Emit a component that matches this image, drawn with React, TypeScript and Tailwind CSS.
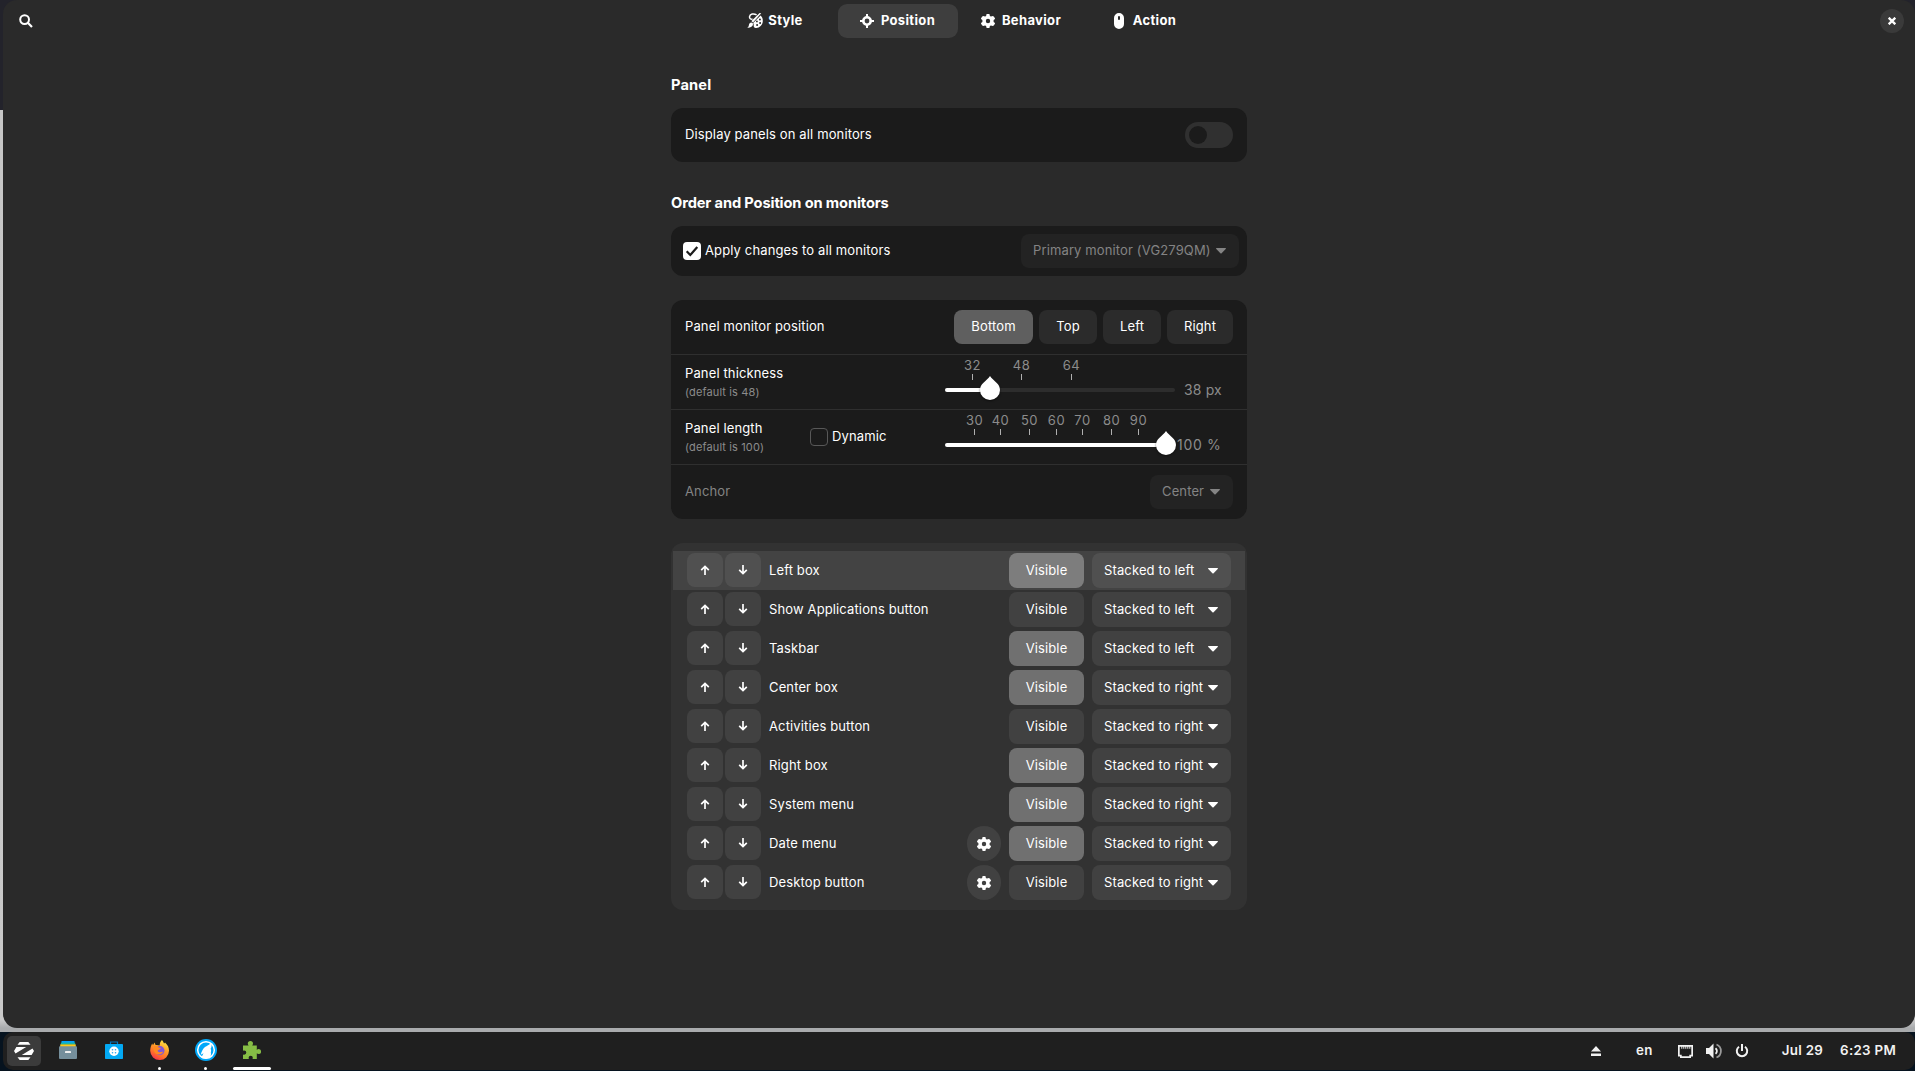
import React from "react";

type IconProps = { className?: string };

const Svg = ({
  size = 16,
  h,
  className = "",
  children,
}: {
  size?: number;
  h?: number;
  className?: string;
  children: React.ReactNode;
}) => (
  <svg
    width={size}
    height={h ?? size}
    viewBox={`0 0 ${size} ${h ?? size}`}
    className={`block shrink-0 ${className}`}
    fill="currentColor"
  >
    {children}
  </svg>
);

const SearchIcon = () => (
  <Svg size={14}>
    <circle cx="5.6" cy="5.6" r="4.4" fill="none" stroke="currentColor" strokeWidth="2" />
    <path d="M8.8 8.8 13 13" stroke="currentColor" strokeWidth="2.2" />
  </Svg>
);

const PaletteIcon = () => (
  <Svg size={16}>
    <path d="M9.6 1.900C6.800.1 2.800.9 2.500 3.800c-.1 1.700 1.200 2.700 3 2.300" fill="none" stroke="currentColor" strokeWidth="1.500" />
    <path d="M14.200.300 6 9.400 4.400 8 12.600.100z" />
    <path d="M4.300 9.600c1.100.1 1.700.8 1.700 1.700C5.900 13.600 3 15 .300 14.700c1.300-.6 1.500-1.500 1.600-2.600.2-1.500 1.100-2.500 2.400-2.500z" />
    <path
      fillRule="evenodd"
      d="M13.600 2.600C15.200 4 16 6 15.800 8.300c-.3 4.100-3.500 6.900-7.100 6.600-1.400-.1-2.100-1-2-2.200.1-1.300-.1-2.200-.5-2.800zM12.900 5.400a1 1 0 1 0 0 2 1 1 0 0 0 0-2zm.2 3.500a1 1 0 1 0 0 2 1 1 0 0 0 0-2zm-3 2.100a1 1 0 1 0 0 2 1 1 0 0 0 0-2zm-.2-3.500a.9.9 0 1 0 0 1.800.9.9 0 0 0 0-1.800z"
    />
  </Svg>
);

const TargetIcon = () => (
  <Svg size={14}>
    <circle cx="7" cy="7" r="3.700" fill="none" stroke="currentColor" strokeWidth="2.600" />
    <path d="M6 0h2v3H6zM6 11h2v3H6zM0 6h3v2H0zM11 6h3v2h-3z" />
  </Svg>
);

const GearIcon = ({ className }: IconProps) => (
  <Svg size={14} className={className}>
    <path
      fillRule="evenodd"
      d="M5.600 0h2.800l.5 1.900 1 .5 2-.5 1.100.9 1.100 2-1.500 1.300v1.800l1.500 1.300-1.100 2-1.100.9-2-.5-1 .5-.5 1.900H5.600l-.5-1.900-1-.5-2 .5-1.100-.9-1.100-2 1.500-1.300V6.100L-.1 4.800l1.100-2 1.100-.9 2 .5 1-.5zM7 4.800a2.200 2.200 0 1 0 0 4.400 2.200 2.200 0 0 0 0-4.400z"
    />
  </Svg>
);

const MouseIcon = () => (
  <Svg size={16}>
    <path
      fillRule="evenodd"
      d="M8 0a5 5 0 0 1 5 5v6A5 5 0 0 1 3 11V5a5 5 0 0 1 5-5zM8 3a1 1 0 0 0-1 1v2a1 1 0 0 0 2 0V4a1 1 0 0 0-1-1z"
    />
  </Svg>
);

const Caret = () => (
  <Svg size={10} h={6}>
    <path d="M.4 0h9.200q.6.400.1.900L5.600 5.300q-.6.500-1.200 0L.3.900Q-.2.400.4 0z" />
  </Svg>
);

const ArrowUp = () => (
  <Svg size={10}>
    <path d="M5 10V1.500M1.200 5.200 5 1.400l3.800 3.800" fill="none" stroke="currentColor" strokeWidth="1.700" />
  </Svg>
);

const ArrowDown = () => (
  <Svg size={10}>
    <path d="M5 0v8.500M1.200 4.800 5 8.600l3.800-3.800" fill="none" stroke="currentColor" strokeWidth="1.700" />
  </Svg>
);

const CloseIcon = () => (
  <Svg size={8}>
    <path d="M.7.7 7.300 7.300M7.300.7.7 7.300" stroke="currentColor" strokeWidth="2.300" />
  </Svg>
);

const Tab = ({
  icon,
  label,
  className,
}: {
  icon: React.ReactNode;
  label: string;
  className: string;
}) => (
  <button
    className={`flex h-[34px] items-center justify-center rounded-[9px] text-[13px] font-bold tracking-[0.350px] ${className}`}
  >
    {icon}
    {label}
  </button>
);

const Heading = ({ children, className }: { children: React.ReactNode; className: string }) => (
  <h2 className={`text-[14.670px] leading-5 font-bold ${className}`}>{children}</h2>
);

const Check = ({ checked = false }: { checked?: boolean }) =>
  checked ? (
    <span className="flex size-[18px] items-center justify-center rounded-[4px] bg-white text-[#1b1b1b]">
      <Svg size={14}>
        <path d="M1.700 7.300 5.300 11 12.300 3" fill="none" stroke="currentColor" strokeWidth="2.200" />
      </Svg>
    </span>
  ) : (
    <span className="size-[18px] rounded-[4px] border border-[#585858]" />
  );

const Mark = ({ label, className }: { label: string; className: string }) => (
  <span className={`absolute top-0 flex w-8 -translate-x-1/2 flex-col items-center ${className}`}>
    <span className="text-[13px] leading-[18px] tracking-[0.500px] text-[#8c8c8c]">{label}</span>
    <span className="h-[6px] w-px bg-[#b0b0b0]" />
  </span>
);

const Thumb = ({ className }: { className: string }) => (
  <svg
    width="22"
    height="26"
    viewBox="0 0 22 26"
    className={`absolute top-[18px] drop-shadow-[0_1px_1px_rgba(0,0,0,0.5)] ${className}`}
  >
    <path d="M11 1c1.500 2.300 4 4.300 6.500 6.700A10.200 10.200 0 0 1 21 15a10 10 0 0 1-20 0c0-3 1.300-5.400 3.500-7.300C7 5.300 9.500 3.300 11 1z" fill="#fff" />
  </svg>
);

const thicknessMarks = [
  { label: "32", at: "left-[27.5px]" },
  { label: "48", at: "left-[76.5px]" },
  { label: "64", at: "left-[126.5px]" },
];

const lengthMarks = [
  { label: "30", at: "left-[29.5px]" },
  { label: "40", at: "left-[55.5px]" },
  { label: "50", at: "left-[84.5px]" },
  { label: "60", at: "left-[111.5px]" },
  { label: "70", at: "left-[137.5px]" },
  { label: "80", at: "left-[166.5px]" },
  { label: "90", at: "left-[193.5px]" },
];

const rows = [
  { name: "Left box", visible: true, to: "Stacked to left", hover: true },
  { name: "Show Applications button", visible: false, to: "Stacked to left" },
  { name: "Taskbar", visible: true, to: "Stacked to left" },
  { name: "Center box", visible: true, to: "Stacked to right" },
  { name: "Activities button", visible: false, to: "Stacked to right" },
  { name: "Right box", visible: true, to: "Stacked to right" },
  { name: "System menu", visible: true, to: "Stacked to right" },
  { name: "Date menu", visible: true, to: "Stacked to right", gear: true },
  { name: "Desktop button", visible: false, to: "Stacked to right", gear: true },
];

const Row = ({ row }: { row: (typeof rows)[number] }) => {
  const soft = row.hover ? "bg-[#505050]" : "bg-[#414141]";
  const on = row.hover ? "bg-[#7d7d7d]" : "bg-[#707070]";
  return (
    <div className={`mx-0.5 flex h-[39px] items-start pt-0.5 pr-[14px] pl-[14px] ${row.hover ? "bg-[#434343]" : ""}`}>
      <button className={`flex h-[34px] w-9 items-center justify-center rounded-[8px] ${soft}`}>
        <ArrowUp />
      </button>
      <button className={`ml-0.5 flex h-[34px] w-9 items-center justify-center rounded-[8px] ${soft}`}>
        <ArrowDown />
      </button>
      <span className="ml-2 flex h-[35px] flex-1 items-center">{row.name}</span>
      {row.gear && (
        <button className={`mr-2 flex h-[35px] w-[34px] items-center justify-center rounded-full ${soft}`}>
          <GearIcon />
        </button>
      )}
      <button className={`h-[35px] w-[75px] rounded-[8px] ${row.visible ? on : soft}`}>Visible</button>
      <button className={`ml-2 flex h-[35px] w-[139px] items-center justify-between rounded-[8px] pr-[13px] pl-3 ${soft}`}>
        {row.to}
        <Caret />
      </button>
    </div>
  );
};

const ZorinIcon = () => (
  <Svg size={20} h={18}>
    <path d="M5.700 0h8.600l2.200 2.800h-13zM5.700 18h8.600l2.200-2.800h-13zM2.400 5h9.800L1.500 11.600 0 9zM17.600 13H7.800l10.700-6.600L20 9z" />
  </Svg>
);

const FilesIcon = () => (
  <Svg size={18}>
    <path d="M2.500 0h13v2h-13z" fill="#00a2ff" />
    <path d="M1.800 1.600h14.400v2.200H1.800z" fill="#1cb5a5" />
    <path d="M1.200 3.400h15.600V6H1.200z" fill="#ffca1a" />
    <rect y="5.300" width="18" height="12.700" rx="1" fill="#758f9c" />
    <rect x="6" y="10" width="6" height="2" rx=".6" fill="#eee" />
  </Svg>
);

const StoreIcon = () => (
  <Svg size={18}>
    <path d="M5.500 4V1h7v3" fill="none" stroke="#0277bd" strokeWidth="1.200" />
    <rect y="3" width="18" height="15" rx=".8" fill="#03a9f4" />
    <circle cx="9" cy="10.300" r="4.700" fill="#fff" />
    <circle cx="7.500" cy="8.800" r=".8" fill="#29a9f0" />
    <circle cx="10.500" cy="8.800" r=".8" fill="#29a9f0" />
    <circle cx="7.500" cy="11.800" r=".8" fill="#29a9f0" />
    <circle cx="10.500" cy="11.800" r=".8" fill="#29a9f0" />
  </Svg>
);

const FirefoxIcon = () => (
  <Svg size={19} h={20} className="-translate-x-px">
    <defs>
      <linearGradient id="fox" x1="0.800" y1="0" x2="0.300" y2="1">
        <stop offset="0" stopColor="#fff04a" />
        <stop offset=".4" stopColor="#ffa32a" />
        <stop offset=".75" stopColor="#ff6a2c" />
        <stop offset="1" stopColor="#f5314f" />
      </linearGradient>
    </defs>
    <path
      d="M12 0c1 1.200 1.600 2.400 2 3.500.6-.3.900-.5 1-1 2.800 2.500 4 5 4 8.300A9.300 9.300 0 0 1 9.500 20 9.300 9.300 0 0 1 .2 11C.1 8.300 1 5.500 2.200 3.500L3 5.200C3.500 4 4 3.200 4.900 2.500c0 1 .3 2 .8 2.500 1.200-.2 2.800 0 4 .6C9.600 3.300 10.500 1.300 12 0z"
      fill="url(#fox)"
    />
    <circle cx="10" cy="10.600" r="4.500" fill="#8057d8" />
    <path d="M3.800 6.600c1.800-.9 3.600-.5 4.800.8l2.200.6c-.4 1.300-1.700 1.500-2.600 2-.9.600-.6 1.600.4 2 1.500.6 3.400-.5 4.500 0-1.200 2.600-5.500 3.300-7.900.9-1.700-1.700-2-4-1.400-6.300z" fill="#ff8a22" />
  </Svg>
);

const WolfIcon = () => (
  <Svg size={22}>
    <circle cx="11" cy="11" r="11" fill="#00a8fa" />
    <circle cx="11" cy="11" r="8.300" fill="#00a8fa" stroke="#fff" strokeWidth="1.500" />
    <path d="M16.200 4.200c.7 2 .5 3.700-.6 5.500.7 1.200.6 2.400.2 3.600.4 1.600.2 3.200-.6 4.700-2.600 1.700-6 2-9 .8l2.300-4.600-2.700 1.500c.6-3.100 2-5.600 4.200-7.600C11.800 6.600 14.200 5.800 16.200 4.200z" fill="#fff" />
  </Svg>
);

const PuzzleIcon = () => (
  <Svg size={18}>
    <path
      d="M0 4.500h5.600A2.700 2.700 0 0 1 4.800 2.600a2.600 2.600 0 0 1 5.200 0c0 .8-.3 1.400-.8 1.900h4.600v4.400c.5-.5 1-.8 1.800-.8a2.500 2.500 0 0 1 0 5c-.8 0-1.300-.3-1.800-.8V18H9.500c.2-.4.300-.8.300-1.200a2.100 2.100 0 0 0-4.200 0c0 .4.100.8.300 1.200H0v-4.600c.4.200.8.300 1.200.3a2.100 2.100 0 0 0 0-4.200c-.4 0-.8.100-1.200.3z"
      fill="#86bd45"
    />
  </Svg>
);

const Launcher = ({ children, mark }: { children: React.ReactNode; mark?: "dot" | "bar" }) => (
  <div className="flex h-full w-[46px] flex-col items-center">
    <div className="flex h-[35px] items-end">
      <div className="flex h-[33px] items-center pb-0.5">{children}</div>
    </div>
    {mark === "dot" && <span className="size-[3px] -translate-x-px rounded-full bg-white" />}
    {mark === "bar" && <span className="h-[3px] w-[38px] rounded-full bg-white" />}
  </div>
);

export default function App() {
  return (
    <div className="flex h-[1071px] w-[1915px] flex-col overflow-hidden bg-[linear-gradient(#23232b_0,#23232b_110px,#c6c6c6_110px,#c9c9c9_1020px,#a9abad_1028px,#a9abad_1032px,#06131f_1032px)] font-['Inter','Liberation_Sans',sans-serif] text-[13px] tracking-[0.130px] text-white">
      <main className="ml-[3px] flex h-[1028px] flex-col rounded-[14px] bg-[#2a2a2a]">
        <header className="grid h-[42px] grid-cols-[1fr_auto_1fr] items-center">
          <div className="pl-4">
            <SearchIcon />
          </div>
          <nav className="flex gap-0.5">
            <Tab icon={<PaletteIcon />} label="Style" className="w-[120px] gap-[5px] pr-px" />
            <Tab icon={<TargetIcon />} label="Position" className="w-[120px] gap-[7px] bg-[#3e3e3e]" />
            <Tab icon={<GearIcon />} label="Behavior" className="w-[123px] gap-[7px]" />
            <Tab icon={<MouseIcon />} label="Action" className="w-[118px] gap-[6px]" />
          </nav>
          <div className="flex justify-end pr-[11px]">
            <button className="flex size-6 items-center justify-center rounded-full bg-[#3a3a3a]">
              <CloseIcon />
            </button>
          </div>
        </header>

        <div className="ml-[668px] flex w-[576px] flex-col">
          <Heading className="mt-[33px]">Panel</Heading>
          <section className="mt-[13px] flex h-[54px] items-center justify-between rounded-[12px] bg-[#1b1b1b] px-[14px]">
            Display panels on all monitors
            <span className="flex h-[26px] w-12 items-center rounded-full bg-[#303030] px-1">
              <span className="size-[18px] rounded-full bg-[#1b1b1b]" />
            </span>
          </section>

          <Heading className="mt-[31px] tracking-[-0.130px]">Order and Position on monitors</Heading>
          <section className="mt-[13px] flex h-[50px] items-center justify-between rounded-[12px] bg-[#1b1b1b] pr-2 pl-3">
            <label className="flex items-center gap-1">
              <Check checked />
              Apply changes to all monitors
            </label>
            <button className="flex h-[34px] w-[218px] items-center justify-between rounded-[8px] bg-[#232323] pr-[13px] pl-3 text-[#848484]">
              Primary monitor (VG279QM)
              <Caret />
            </button>
          </section>

          <section className="mt-6 h-[219px] divide-y divide-[#2f2f2f] rounded-[12px] bg-[#1b1b1b]">
            <div className="flex h-[55px] items-center justify-between px-[14px]">
              Panel monitor position
              <div className="flex gap-1.5">
                <button className="h-[34px] w-[79px] rounded-[8px] bg-[#5f5f5f]">Bottom</button>
                <button className="h-[34px] w-[58px] rounded-[8px] bg-[#2b2b2b]">Top</button>
                <button className="h-[34px] w-[58px] rounded-[8px] bg-[#2b2b2b]">Left</button>
                <button className="h-[34px] w-[66px] rounded-[8px] bg-[#2b2b2b]">Right</button>
              </div>
            </div>
            <div className="flex h-[55px] pl-[14px]">
              <div className="w-[260px] pt-[9px]">
                <p className="leading-[19px]">Panel thickness</p>
                <p className="text-[11px] leading-[18px] text-[#8c8c8c]">(default is 48)</p>
              </div>
              <div className="relative h-full w-[230px] pt-[33px]">
                <div className="h-1 rounded-full bg-[#2d2d2d]">
                  <div className="h-1 w-[45px] rounded-full bg-white" />
                </div>
                {thicknessMarks.map((m) => (
                  <Mark key={m.label} label={m.label} className={`mt-px ${m.at}`} />
                ))}
                <Thumb className="left-[34px] mt-[2px]" />
              </div>
              <span className="ml-[9px] pt-[25px] text-[14px] leading-[20px] tracking-[0.150px] text-[#8c8c8c]">38 px</span>
            </div>
            <div className="flex h-[55px] pl-[14px]">
              <div className="w-[125px] pt-[9px]">
                <p className="leading-[19px]">Panel length</p>
                <p className="text-[11px] leading-[18px] text-[#8c8c8c]">(default is 100)</p>
              </div>
              <label className="flex w-[135px] items-center gap-1">
                <Check />
                Dynamic
              </label>
              <div className="relative h-full w-[230px] pt-[33px]">
                <div className="h-1 w-[225px] rounded-full bg-white" />
                {lengthMarks.map((m) => (
                  <Mark key={m.label} label={m.label} className={`mt-px ${m.at}`} />
                ))}
                <Thumb className="left-[210px] mt-[2px]" />
              </div>
              <span className="ml-[2px] pt-[25px] text-[14px] leading-[20px] tracking-[0.700px] text-[#8c8c8c]">100 %</span>
            </div>
            <div className="flex h-[54px] items-center justify-between px-[14px] text-[#848484]">
              Anchor
              <button className="flex h-[34px] w-[83px] items-center justify-between rounded-[8px] bg-[#232323] pr-[13px] pl-3">
                Center
                <Caret />
              </button>
            </div>
          </section>

          <section className="mt-6 h-[367px] rounded-[12px] bg-[#323232] pt-2">
            {rows.map((r) => (
              <Row key={r.name} row={r} />
            ))}
          </section>
        </div>
      </main>

      <footer className="mt-1 ml-[3px] flex h-[38px] justify-between rounded-[10px] bg-[#1f1f1f]">
        <div className="flex">
          <div className="mt-1 mr-[19px] ml-1 flex h-[30px] w-[34px] items-center justify-center rounded-[5px] bg-[#3b3b3b]">
            <ZorinIcon />
          </div>
          <div className="-ml-[15px] flex">
            <Launcher>
              <FilesIcon />
            </Launcher>
            <Launcher>
              <StoreIcon />
            </Launcher>
            <Launcher mark="dot">
              <FirefoxIcon />
            </Launcher>
            <Launcher mark="dot">
              <WolfIcon />
            </Launcher>
            <Launcher mark="bar">
              <PuzzleIcon />
            </Launcher>
          </div>
        </div>
        <div className="flex items-center pr-[19px] text-[13.330px] font-semibold tracking-[0.300px] text-[#f2f2f2]">
          <Svg size={10} className="mr-[35px]">
            <path d="M5 0 10 5.500H0zM0 7.500h10V10H0z" />
          </Svg>
          <span className="mr-[25px]">en</span>
          <Svg size={15} h={13} className="mr-[13px]">
            <path
              fillRule="evenodd"
              d="M0 0h15v11.500h-2V13H2v-1.500H0zM1.700 1.700v8.100h2v1.500h7.600V9.800h2V1.700h-1v2h-1v-2h-1v2h-1v-2h-1v2h-1v-2h-1v2h-1v-2h-1v2h-1v-2z"
            />
          </Svg>
          <Svg size={16} className="mr-[13px]">
            <path d="M0 5h3l4.500-4.500v15L3 11H0z" />
            <path d="M9.500 5.200a3.500 3.500 0 0 1 0 5.600" fill="none" stroke="currentColor" strokeWidth="1.800" />
            <path d="M10.500 1.500a7 7 0 0 1 0 13" fill="none" stroke="#9a9a9a" strokeWidth="1.800" />
          </Svg>
          <Svg size={14} className="mr-[33px]">
            <path d="M4 2.800a5.200 5.200 0 1 0 6 0" fill="none" stroke="currentColor" strokeWidth="2" />
            <path d="M6 0h2v7H6z" />
          </Svg>
          <span className="mr-[17px]">Jul 29</span>
          <span>6:23 PM</span>
        </div>
      </footer>
    </div>
  );
}
